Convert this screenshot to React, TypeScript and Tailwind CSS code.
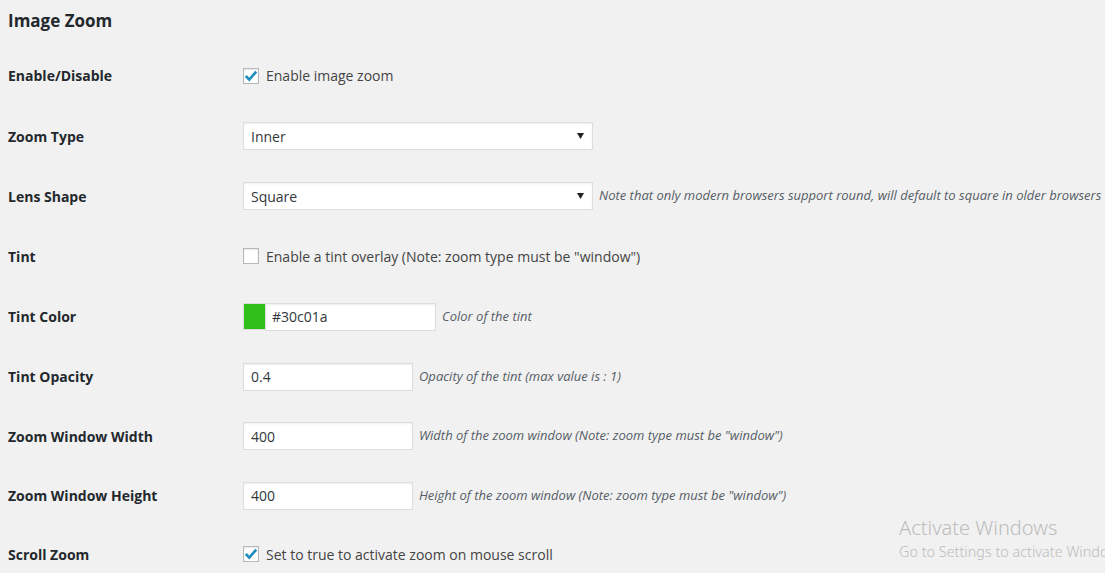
import { ReactNode } from 'react'

const labelCls = 'w-[235px] shrink-0 text-[14px] font-bold text-[#23282d]'
const descCls = 'ml-[6px] text-[13px] italic text-[#555d66] whitespace-nowrap'
const inputCls =
  'h-[28px] bg-white border border-[#ddd] shadow-[inset_0_1px_2px_rgba(0,0,0,0.07)] px-[7px] text-[14px] text-[#32373c] flex items-center'

function Row({ label, h, children }: { label: string; h: string; children: ReactNode }) {
  return (
    <div className={`${h} flex items-center`}>
      <div className={labelCls}>{label}</div>
      <div className="flex items-center">{children}</div>
    </div>
  )
}

function Checkbox({ checked }: { checked?: boolean }) {
  return (
    <div className="w-[16px] h-[16px] bg-white border border-[#b4b9be] shadow-[inset_0_1px_2px_rgba(0,0,0,0.1)] flex items-center justify-center">
      {checked && (
        <svg width="14" height="14" viewBox="0 0 14 14">
          <path d="M1.8 7 L5.3 10.6 L12.2 2.6" fill="none" stroke="#1e8cbe" strokeWidth="2.6" />
        </svg>
      )}
    </div>
  )
}

function Select({ value }: { value: string }) {
  return (
    <div className={`${inputCls} w-[350px] justify-between pr-[8px]`}>
      <span>{value}</span>
      <svg width="7" height="6" viewBox="0 0 7 6">
        <path d="M0 0 H7 L3.5 6 Z" fill="#222" />
      </svg>
    </div>
  )
}

export default function App() {
  return (
    <div className="relative min-h-[573px] w-[1105px] overflow-hidden bg-[#f1f1f1] pl-[8px] font-['Open_Sans',sans-serif] text-[#444]">
      <div className="h-[45px] flex items-center pb-[3px]">
        <h2 className="text-[17px] font-bold text-[#23282d]">Image Zoom</h2>
      </div>

      <Row label="Enable/Disable" h="h-[61px]">
        <Checkbox checked />
        <span className="ml-[7px] text-[14px]">Enable image zoom</span>
      </Row>

      <Row label="Zoom Type" h="h-[60px]">
        <Select value="Inner" />
      </Row>

      <Row label="Lens Shape" h="h-[60px]">
        <Select value="Square" />
        <span className={descCls}>Note that only modern browsers support round, will default to square in older browsers</span>
      </Row>

      <Row label="Tint" h="h-[60px]">
        <Checkbox />
        <span className="ml-[7px] text-[14px]">Enable a tint overlay (Note: zoom type must be "window")</span>
      </Row>

      <div className="h-[61px] flex items-center">
        <div className={labelCls}>Tint Color</div>
        <div className="flex items-center">
          <div className="h-[27px] w-[22px] bg-[#30c01a] border border-[#ddd] border-r-0" />
          <div className={`${inputCls} h-[27px] w-[171px] pl-[6px]`}>#30c01a</div>
          <span className={descCls}>Color of the tint</span>
        </div>
      </div>

      <Row label="Tint Opacity" h="h-[59px]">
        <div className={`${inputCls} w-[170px]`}>0.4</div>
        <span className={descCls}>Opacity of the tint (max value is : 1)</span>
      </Row>

      <Row label="Zoom Window Width" h="h-[60px]">
        <div className={`${inputCls} w-[170px]`}>400</div>
        <span className={descCls}>Width of the zoom window (Note: zoom type must be "window")</span>
      </Row>

      <Row label="Zoom Window Height" h="h-[59px]">
        <div className={`${inputCls} w-[170px]`}>400</div>
        <span className={descCls}>Height of the zoom window (Note: zoom type must be "window")</span>
      </Row>

      <Row label="Scroll Zoom" h="h-[58px]">
        <Checkbox checked />
        <span className="ml-[7px] text-[14px]">Set to true to activate zoom on mouse scroll</span>
      </Row>

      <div className="absolute left-[899px] top-[515px] whitespace-nowrap font-['Noto_Sans',sans-serif] text-[#bdbdbd]">
        <div className="text-[20px] font-light leading-[26px]">Activate Windows</div>
        <div className="text-[14.4px] font-light leading-[21px]">Go to Settings to activate Windows.</div>
      </div>
    </div>
  )
}
